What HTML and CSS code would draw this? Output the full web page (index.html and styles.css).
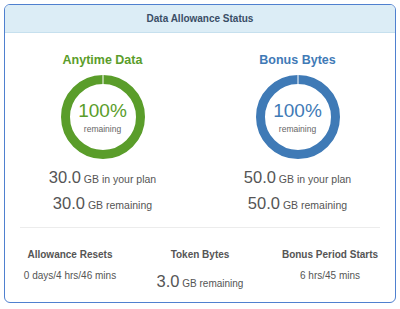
FILE: index.html
```html
<!DOCTYPE html>
<html lang="en">
<head>
  <meta charset="UTF-8" />
  <title>Data Allowance Status</title>
  <link rel="stylesheet" href="styles.css">
</head>
<body>
  <div class="card">
    <div class="card-header">Data Allowance Status</div>

    <div class="plans">
      <div class="plan anytime">
        <div class="plan-title">Anytime Data</div>
        <div class="ring">
          <svg width="84" height="84" viewBox="0 0 84 84">
            <circle cx="42" cy="42" r="37.5" fill="none" stroke="#5a9d2a" stroke-width="9" />
            <rect x="41.5" y="0" width="1" height="10" fill="#fff" />
          </svg>
          <div class="ring-text">
            <div class="pct">100%</div>
            <div class="pct-label">remaining</div>
          </div>
        </div>
        <div class="stats">
          <div class="stat"><span class="big">30.0</span> GB in your plan</div>
          <div class="stat"><span class="big">30.0</span> GB remaining</div>
        </div>
      </div>

      <div class="plan bonus">
        <div class="plan-title">Bonus Bytes</div>
        <div class="ring">
          <svg width="84" height="84" viewBox="0 0 84 84">
            <circle cx="42" cy="42" r="37.5" fill="none" stroke="#3f7ab6" stroke-width="9" />
            <rect x="41.5" y="0" width="1" height="10" fill="#fff" />
          </svg>
          <div class="ring-text">
            <div class="pct">100%</div>
            <div class="pct-label">remaining</div>
          </div>
        </div>
        <div class="stats">
          <div class="stat"><span class="big">50.0</span> GB in your plan</div>
          <div class="stat"><span class="big">50.0</span> GB remaining</div>
        </div>
      </div>
    </div>

    <div class="divider"></div>

    <div class="footer">
      <div class="info">
        <div class="info-label">Allowance Resets</div>
        <div class="info-value">0 days/4 hrs/46 mins</div>
      </div>
      <div class="info">
        <div class="info-label">Token Bytes</div>
        <div class="info-value token"><span class="big">3.0</span> GB remaining</div>
      </div>
      <div class="info">
        <div class="info-label">Bonus Period Starts</div>
        <div class="info-value">6 hrs/45 mins</div>
      </div>
    </div>
  </div>
</body>
</html>
```

FILE: styles.css
```css
body {
  margin: 0;
  padding: 4px;
  background: #fff;
  font-family: "Liberation Sans", Arial, sans-serif;
  color: #555;
}

.card {
  height: 299px;
  box-sizing: border-box;
  border: 1px solid #4f80cf;
  border-radius: 6px;
  overflow: hidden;
}

.card-header {
  height: 28px;
  box-sizing: border-box;
  background: #dcedf6;
  border-bottom: 1px solid #c6e0ee;
  color: #3a4e66;
  font-size: 10px;
  font-weight: bold;
  line-height: 27px;
  text-align: center;
}

.plans {
  display: flex;
  padding-top: 19px;
}

.plan {
  flex: 1;
  display: flex;
  flex-direction: column;
  align-items: center;
}

.plan-title {
  font-size: 12.5px;
  font-weight: bold;
  line-height: 16px;
  margin-bottom: 7px;
}

.anytime .plan-title,
.anytime .pct {
  color: #5a9d2a;
}

.bonus .plan-title,
.bonus .pct {
  color: #3f7ab6;
}

.ring {
  position: relative;
  width: 84px;
  height: 84px;
}

.ring svg {
  display: block;
}

.ring-text {
  position: absolute;
  top: 0;
  left: 0;
  right: 0;
  padding-top: 26px;
  text-align: center;
}

.pct {
  font-size: 19px;
  line-height: 20px;
}

.pct-label {
  margin-top: 2px;
  font-size: 8.5px;
  line-height: 12px;
  color: #666;
}

.stats {
  margin-top: 6px;
  text-align: center;
}

.stat {
  font-size: 10.5px;
  line-height: 24px;
}

.big {
  font-size: 16.5px;
}

.divider {
  margin: 10px 15px 0;
  border-top: 1px solid #ececec;
}

.footer {
  display: flex;
  padding-top: 20px;
}

.info {
  flex: 1;
  text-align: center;
}

.info-label {
  font-size: 10px;
  font-weight: bold;
  line-height: 14px;
}

.info-value {
  margin-top: 7px;
  font-size: 10px;
  line-height: 14px;
}

.info-value.token {
  line-height: 24px;
}
```
